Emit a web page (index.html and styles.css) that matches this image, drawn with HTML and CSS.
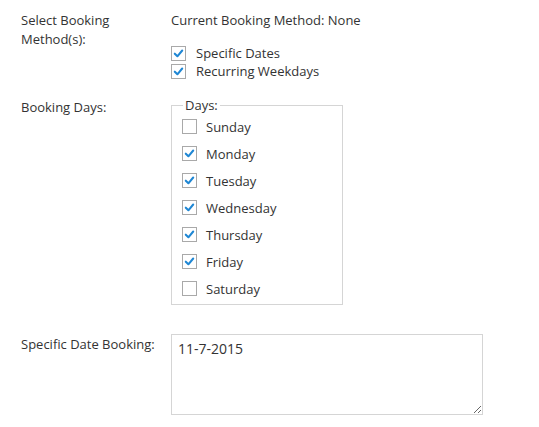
FILE: index.html
```html
<!DOCTYPE html>
<html>
<head>
<meta charset="utf-8">
<link rel="stylesheet" href="styles.css">
</head>
<body>
<div class="form">
  <div class="row row-method">
    <div class="label">Select Booking<br>Method(s):</div>
    <div class="control">
      <div class="current">Current Booking Method: None</div>
      <div class="checklist tight">
        <label class="check"><span class="box checked"><svg viewBox="0 0 14 14"><path d="M3 7.2 L5.8 10 L11 3.8" /></svg></span>Specific Dates</label>
        <label class="check"><span class="box checked"><svg viewBox="0 0 14 14"><path d="M3 7.2 L5.8 10 L11 3.8" /></svg></span>Recurring Weekdays</label>
      </div>
    </div>
  </div>
  <div class="row row-days">
    <div class="label">Booking Days:</div>
    <div class="control">
      <fieldset class="days">
        <legend>Days:</legend>
        <label class="check day"><span class="box"></span>Sunday</label>
        <label class="check day"><span class="box checked"><svg viewBox="0 0 14 14"><path d="M3 7.2 L5.8 10 L11 3.8" /></svg></span>Monday</label>
        <label class="check day"><span class="box checked"><svg viewBox="0 0 14 14"><path d="M3 7.2 L5.8 10 L11 3.8" /></svg></span>Tuesday</label>
        <label class="check day"><span class="box checked"><svg viewBox="0 0 14 14"><path d="M3 7.2 L5.8 10 L11 3.8" /></svg></span>Wednesday</label>
        <label class="check day"><span class="box checked"><svg viewBox="0 0 14 14"><path d="M3 7.2 L5.8 10 L11 3.8" /></svg></span>Thursday</label>
        <label class="check day"><span class="box checked"><svg viewBox="0 0 14 14"><path d="M3 7.2 L5.8 10 L11 3.8" /></svg></span>Friday</label>
        <label class="check day"><span class="box"></span>Saturday</label>
      </fieldset>
    </div>
  </div>
  <div class="row row-dates">
    <div class="label">Specific Date Booking:</div>
    <div class="control">
      <textarea class="dates">11-7-2015</textarea>
    </div>
  </div>
</div>
</body>
</html>
```
FILE: styles.css
```css
html, body {
  margin: 0;
  padding: 0;
  background: #fff;
}
body {
  font-family: "Open Sans", "Liberation Sans", sans-serif;
  font-size: 13px;
  line-height: 18px;
  color: #333;
}
.form {
  padding: 11px 0 0 21px;
}
.row {
  display: grid;
  grid-template-columns: 150px 1fr;
}
.label {
  line-height: 19px;
}
.checklist.tight {
  margin-top: 15px;
  display: flex;
  flex-direction: column;
}
.check {
  display: flex;
  align-items: center;
  gap: 10px;
  height: 18px;
}
.box {
  box-sizing: border-box;
  width: 15px;
  height: 15px;
  border: 1px solid #a9a9a9;
  background: #fff;
  display: inline-flex;
  align-items: center;
  justify-content: center;
  flex: none;
}
.box svg {
  width: 13px;
  height: 13px;
}
.box path {
  fill: none;
  stroke: #1f87d4;
  stroke-width: 2.2;
  stroke-linecap: round;
  stroke-linejoin: round;
}
.row-days {
  margin-top: 18px;
}
.days {
  box-sizing: border-box;
  width: 172px;
  margin: 0;
  padding: 0 0 2px 10px;
  border: 1px solid #d5d5d5;
}
.days legend {
  padding: 0 2px;
  margin-left: 1px;
  line-height: 15px;
}
.check.day {
  height: 27px;
  gap: 9px;
}
.row-dates {
  margin-top: 29px;
}
.row-dates .label {
  padding-top: 1px;
}
.dates {
  box-sizing: border-box;
  width: 312px;
  height: 81px;
  border: 1px solid #d5d5d5;
  font-family: "Open Sans", "Liberation Sans", sans-serif;
  font-size: 14px;
  line-height: 20px;
  color: #333;
  padding: 4px 6px;
  margin: 0;
  display: block;
  resize: both;
}
```
